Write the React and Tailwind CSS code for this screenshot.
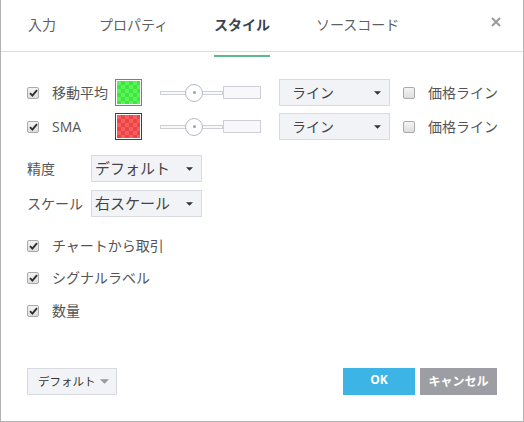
import React from "react";

const font = "font-['Open_Sans','Noto_Sans_CJK_JP',sans-serif]";

function Check({ checked }) {
  return (
    <span className="w-[12px] h-[12px] shrink-0 border border-[#a9a9a9] rounded-[2px] bg-gradient-to-b from-[#f4f4f4] to-[#dedede] flex items-center justify-center">
      {checked && (
        <svg width="9" height="8" viewBox="0 0 9 8">
          <path d="M1 4.2 L3.4 6.6 L8 1.2" fill="none" stroke="#2f2f2f" strokeWidth="1.9" />
        </svg>
      )}
    </span>
  );
}

function Caret({ color = "#333", w = 7, h = 4 }) {
  return (
    <svg width={w} height={h} viewBox="0 0 8 4" className="shrink-0">
      <path d="M0 0 L8 0 L4 4 Z" fill={color} />
    </svg>
  );
}

function Select({ text, w, pl, size = "text-[14px]" }) {
  return (
    <div
      className={`h-[27px] ${w} ${pl} pr-[8px] border border-[#d9dbe0] bg-[#f2f3f7] flex items-center justify-between ${size} leading-none text-[#444] whitespace-nowrap`}
    >
      <span>{text}</span>
      <Caret />
    </div>
  );
}

function Slider() {
  return (
    <div className="ml-[18px] w-[101px] h-[20px] shrink-0 flex items-center">
      <div className="w-[26px] h-[4px] border border-[#cdd0d6] bg-[#f8f8fa]" />
      <div className="w-[18px] h-[18px] -mx-px rounded-full border border-[#b5b9c4] bg-white flex items-center justify-center z-10">
        <div className="w-[3px] h-[3px] rounded-full bg-[#9ea2ad]" />
      </div>
      <div className="w-[21px] h-[4px] border border-[#cdd0d6] bg-[#f8f8fa]" />
      <div className="flex-1 h-[13px] border border-[#cdd0d6] bg-[#f8f8fa]" />
    </div>
  );
}

function MaRow({ label, swatch, cls }) {
  return (
    <div className="flex items-center h-[27px] whitespace-nowrap">
      <Check checked />
      <span className="ml-[13px] w-[63px] shrink-0 text-[14px] leading-none text-[#555]">{label}</span>
      <div className={`w-[27px] h-[27px] shrink-0 border ${swatch} p-px`}>
        <div className={`w-full h-full ${cls} [background-size:8px_8px]`} />
      </div>
      <Slider />
      <div className="ml-[18px] shrink-0">
        <Select text="ライン" w="w-[111px]" pl="pl-[12px]" />
      </div>
      <span className="ml-[13px]">
        <Check />
      </span>
      <span className="ml-[13px] text-[14px] leading-none text-[#555]">価格ライン</span>
    </div>
  );
}

export default function App() {
  const tabs = [
    ["入力", "w-[71px]"],
    ["プロパティ", "w-[115px]"],
    ["スタイル", "w-[102px]"],
    ["ソースコード", ""],
  ];
  return (
    <div className={`w-[524px] h-[422px] bg-white border-x border-b border-[#b3b3b3] flex flex-col overflow-hidden ${font}`}>
      <div className="h-[52px] shrink-0 border-b border-[#dcdcdc] flex pl-[27px] pr-[22px]">
        {tabs.map(([t, w]) => (
          <div key={t} className={`${w} pt-[12px]`}>
            <span
              className={
                t === "スタイル"
                  ? "relative inline-block h-[40px] text-[14px] leading-[20px] font-bold text-[#3b4350]"
                  : "text-[14px] leading-[20px] text-[#5f5f5f]"
              }
            >
              {t}
              {t === "スタイル" && (
                <span className="absolute left-0 right-0 bottom-[-2px] h-[2px] bg-[#5bb98b]" />
              )}
            </span>
          </div>
        ))}
        <div className="ml-auto pt-[17px]">
          <svg width="10" height="10" viewBox="0 0 10 10">
            <path d="M1 1 L9 9 M9 1 L1 9" stroke="#9a9a9a" strokeWidth="2" />
          </svg>
        </div>
      </div>

      <div className="px-[26px] pt-[27px] flex flex-col">
        <MaRow
          label="移動平均"
          swatch="border-[#1fc01f]"
          cls="bg-[repeating-conic-gradient(#3ee63e_0_25%,#5cf25c_0_50%)]"
        />
        <div className="mt-[7px]">
          <MaRow
            label="SMA"
            swatch="border-[#a31616]"
            cls="bg-[repeating-conic-gradient(#ee4444_0_25%,#f46060_0_50%)]"
          />
        </div>

        <div className="mt-[15px] flex items-center">
          <span className="w-[64px] text-[14px] leading-none text-[#555]">精度</span>
          <Select text="デフォルト" w="w-[111px]" pl="pl-[3px]" size="text-[15px]" />
        </div>
        <div className="mt-[8px] flex items-center">
          <span className="w-[64px] text-[14px] leading-none text-[#555]">スケール</span>
          <Select text="右スケール" w="w-[111px]" pl="pl-[3px]" size="text-[15px]" />
        </div>

        {["チャートから取引", "シグナルラベル", "数量"].map((t, i) => (
          <div
            key={t}
            className={`${i === 0 ? "mt-[19px]" : i === 1 ? "mt-[12px]" : "mt-[13px]"} h-[20px] flex items-center`}
          >
            <Check checked />
            <span className="ml-[13px] text-[14px] leading-none text-[#555]">{t}</span>
          </div>
        ))}
      </div>

      <div className="mt-auto px-[26px] pb-[26px] flex items-center">
        <div className="h-[27px] w-[90px] border border-[#d9dbe0] bg-[#f2f3f7] pl-[10px] pr-[7px] flex items-center justify-between text-[11.5px] leading-none text-[#333] whitespace-nowrap">
          <span>デフォルト</span>
          <Caret color="#999" w={9} h={5} />
        </div>
        <div className="ml-auto h-[27px] w-[72px] bg-[#3cb4e5] text-white text-[12px] leading-none font-bold flex items-center justify-center pb-[3px]">
          OK
        </div>
        <div className="ml-[5px] h-[27px] w-[77px] bg-[#9c9ea3] text-white text-[12px] leading-none font-bold flex items-center justify-center whitespace-nowrap">
          キャンセル
        </div>
      </div>
    </div>
  );
}
